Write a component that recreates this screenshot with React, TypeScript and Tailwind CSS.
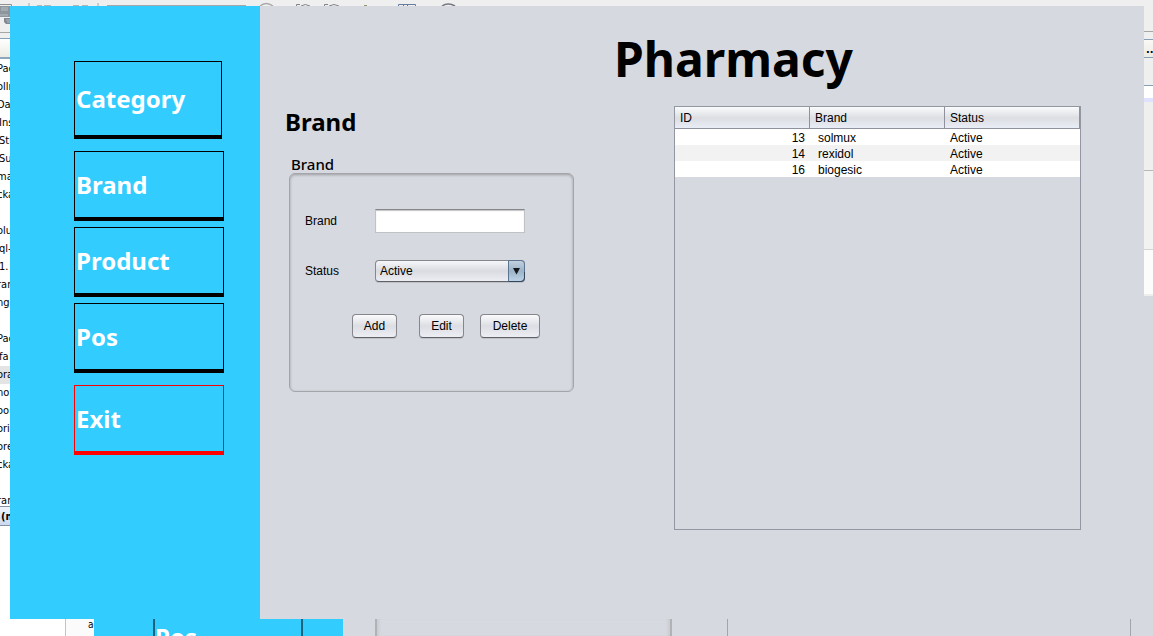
import React from "react";

const tree = [
  { text: "Pac", inset: false },
  { text: "ollm", inset: false },
  { text: "Dat", inset: false },
  { text: "Ins", inset: true },
  { text: "Stu", inset: true },
  { text: "Sul", inset: true },
  { text: "ma", inset: false },
  { text: "cka", inset: false },
  { text: "", inset: false },
  { text: "olu", inset: false },
  { text: "ql-", inset: true },
  { text: "1.", inset: true },
  { text: "ran", inset: false },
  { text: "nge", inset: false },
  { text: "", inset: false },
  { text: "Pac", inset: false },
  { text: "fa", inset: true },
  { text: "ora", inset: false, selected: true },
  { text: "no", inset: false },
  { text: "oo", inset: false },
  { text: "ori", inset: false },
  { text: "ore", inset: false },
  { text: "cka", inset: false },
  { text: "", inset: false },
  { text: "ran", inset: false },
];

const rows = [
  { id: 13, brand: "solmux", status: "Active" },
  { id: 14, brand: "rexidol", status: "Active" },
  { id: 16, brand: "biogesic", status: "Active" },
];

const navBase =
  "block border border-b-4 pl-px text-left text-2xl font-bold text-white font-['Noto_Sans','DejaVu_Sans_Condensed',sans-serif]";

const buttonBase =
  "h-6 rounded border border-[#85878d] border-b-[#5f6167] bg-linear-to-b from-[#fbfbfc] via-[#dcdee3] to-[#eceef4] text-xs shadow-[0_1px_0_#bfc2c8]";

const headCell =
  "border-r border-b border-[#8f929c] pl-[5px] text-left font-normal";

function ToolbarEdge() {
  return (
    <div className="h-[6px] shrink-0 overflow-hidden bg-[#efefef]">
      <svg className="block" width="480" height="6" fill="none" aria-hidden="true">
        <path d="M0 4.500H11.500V6" stroke="#8e9094" />
        <path d="M29 3V6M98 3V6" stroke="#a6a6a6" />
        <path d="M37 5.500H42M44 5.500H51M73 5.500H79M82 5.500H88" stroke="#b5b5b5" />
        <path d="M107 5.500H246" stroke="#a3a6aa" />
        <path d="M260 6Q266 1 273 6" stroke="#a8a8a8" strokeWidth="1.500" />
        <path d="M296.500 6V4.500H300M301 6Q305 3 310 6M324.500 6V4.500H328M329 6Q334 3 339 6" stroke="#80838a" />
        <path d="M364 5.500H367" stroke="#93966a" />
        <path d="M398.500 6V4.500H415.500V6M403.500 5V6M407.500 5V6" stroke="#627ca0" />
        <path d="M442 6Q448 2 455 6" stroke="#70757d" strokeWidth="1.500" />
      </svg>
    </div>
  );
}

function TreeEdge() {
  return (
    <div className="w-[10px] shrink-0 overflow-hidden bg-white font-['DejaVu_Sans_Condensed','Noto_Sans',sans-serif] text-[11px] leading-[18px] whitespace-nowrap text-black">
      <div className="h-[26px] bg-[#efefef]">
        <svg className="block" width="10" height="22" aria-hidden="true">
          <path d="M0 0H10V11H0Z" fill="#8d959d" />
          <path d="M1 2H8M1 4H8M0 9H8" stroke="#b9bec3" />
          <path d="M4 12H10V18H6L4 16Z" fill="#808992" />
          <path d="M6 14H10M7 16H10" stroke="#b4babf" />
        </svg>
      </div>
      <div className="h-[7px] border-b border-[#87a0b5] bg-[#efefef]">
        <div className="h-px bg-[#a6a6a6]" />
      </div>
      <div className="h-5 border-b-2 border-[#8fa5bb] bg-linear-to-b from-white to-[#ecebe4]" />
      <ul className="h-[447px] overflow-hidden pt-px">
        {tree.map((item, i) => (
          <li
            key={i}
            className={
              (item.selected ? "bg-[#e4e4e4] " : "") +
              (item.inset ? "-ml-px h-[18px]" : "-ml-[3px] h-[18px]")
            }
          >
            {item.text}
          </li>
        ))}
      </ul>
      <div className="h-5 border-y border-[#8393aa] bg-linear-to-b from-[#f1f5fc] to-[#cdd8ee] pl-px leading-5 font-bold">
        (m
      </div>
    </div>
  );
}

function EditorEdge() {
  return (
    <div className="w-[9px] shrink-0 overflow-hidden bg-[#d6d9e0]">
      <div className="h-[26px] border-b border-[#a6a6a6] bg-[#efefef]" />
      <div className="h-[7px] bg-[#efefef]" />
      <div className="h-[19px] overflow-hidden border-y border-[#87a0b5] bg-linear-to-b from-[#faf9f5] to-[#ecebe4] pl-[2px] font-['DejaVu_Sans_Condensed',sans-serif] text-[11px] leading-5 font-bold">
        ...
      </div>
      <div className="h-[27px] bg-[#efefef]" />
      <div className="h-[13px] border-t border-[#87a0b5] bg-white" />
      <div className="h-1 bg-[#e0e0ff]" />
      <div className="h-[69px] border-b border-[#b8b8b8] bg-[#efefef]" />
      <div className="h-[79px] border-b border-[#d5d5d5] bg-[#f2f2f2]" />
      <div className="h-[46px] border-b-2 border-[#eeeeee] bg-[#fcfcfc]" />
    </div>
  );
}

function WindowBehind() {
  return (
    <div className="flex h-[17px] shrink-0 overflow-hidden bg-[#d6d9e0]">
      <div className="w-[65px] bg-white" />
      <div className="w-[29px] overflow-hidden border-l border-[#c4c4c4] bg-[#fbfbfb] pl-[22px] font-['DejaVu_Sans_Condensed',sans-serif] text-[10px] leading-3">
        ac
      </div>
      <div className="w-[249px] bg-[#33ccff] pl-[59px]">
        <div className="h-10 w-[150px] border-x-2 border-[#17627c] font-['Noto_Sans','DejaVu_Sans_Condensed',sans-serif] text-2xl leading-9 font-bold text-white">
          Pos
        </div>
      </div>
      <div className="ml-8 w-[297px] border-x-2 border-[#b0b2b6] shadow-[inset_4px_0_3px_-2px_#c9cbcf,inset_-4px_0_3px_-2px_#c9cbcf]" />
      <div className="ml-[55px] mr-[22px] flex-1 border-x border-[#a2a5ac]" />
    </div>
  );
}

function Sidebar() {
  return (
    <nav className="w-[250px] shrink-0 bg-[#33ccff] pt-[55px] pl-16">
      <button className={navBase + " h-[78px] w-[148px] border-black"}>Category</button>
      <button className={navBase + " mt-3 h-[70px] w-[150px] border-black"}>Brand</button>
      <button className={navBase + " mt-[6px] h-[70px] w-[150px] border-black"}>Product</button>
      <button className={navBase + " mt-[6px] h-[70px] w-[150px] border-black"}>Pos</button>
      <button className={navBase + " mt-3 h-[70px] w-[150px] border-[#ff0000]"}>Exit</button>
    </nav>
  );
}

function BrandForm() {
  return (
    <section className="w-[289px] shrink-0 pt-[70px]">
      <h2 className="font-['Noto_Sans','DejaVu_Sans_Condensed',sans-serif] text-2xl leading-8 font-bold">
        Brand
      </h2>
      <form className="ml-1 pt-[18px]" onSubmit={(e) => e.preventDefault()}>
        <h3 className="pb-px pl-[2px] font-['Noto_Sans',sans-serif] text-[15px] leading-4 font-medium">Brand</h3>
        <div className="h-[219px] w-[285px] rounded-md border border-[#a3a5aa] bg-[#d6d9df] pt-[35px] pl-[15px] text-xs shadow-[inset_0_1px_3px_#9b9da3]">
          <div className="flex items-center">
            <label htmlFor="brand" className="w-[70px]">Brand</label>
            <input
              id="brand"
              className="h-6 w-[150px] border border-[#c0c2c6] border-t-[#85878c] bg-white px-1 shadow-[inset_0_1px_1px_#c4c4c4] outline-none"
            />
          </div>
          <div className="mt-[27px] flex items-center">
            <label htmlFor="status" className="w-[70px]">Status</label>
            <div className="relative">
              <select
                id="status"
                className="block h-[22px] w-[150px] appearance-none rounded border border-[#85878d] border-b-[#5f6167] bg-linear-to-b from-[#f6f7f9] via-[#d9dbe0] to-[#eceef4] pl-1 shadow-[0_1px_0_#bfc2c8] outline-none"
              >
                <option>Active</option>
                <option>Inactive</option>
              </select>
              <svg className="pointer-events-none absolute top-0 right-0" width="17" height="22" aria-hidden="true">
                <defs>
                  <linearGradient id="arrow" x1="0" y1="0" x2="0" y2="1">
                    <stop offset="0" stopColor="#c4d2df" />
                    <stop offset="0.500" stopColor="#9bb3c8" />
                    <stop offset="1" stopColor="#bed3e6" />
                  </linearGradient>
                </defs>
                <path d="M.5 .5H13Q16.500 .5 16.500 4V18Q16.500 21.500 13 21.500H.5Z" fill="url(#arrow)" stroke="#5b7590" />
                <path d="M13 21.500Q16.500 21.500 16.500 18V12M.5 21.500H13" fill="none" stroke="#32475c" />
                <path d="M5 8H12L8.500 14.500Z" fill="#15181c" />
              </svg>
            </div>
          </div>
          <div className="mt-8 flex pl-[47px]">
            <button className={buttonBase + " w-[45px]"}>Add</button>
            <button className={buttonBase + " ml-[22px] w-[45px]"}>Edit</button>
            <button className={buttonBase + " ml-4 w-[60px]"}>Delete</button>
          </div>
        </div>
      </form>
    </section>
  );
}

function BrandTable() {
  return (
    <div className="ml-[100px] h-[424px] border border-[#9297a1] text-xs">
      <table className="w-full table-fixed border-separate border-spacing-0">
        <thead>
          <tr className="h-[22px] bg-linear-to-b from-[#fafbfc] via-[#dcdee2] to-[#eaeef7]">
            <th className={headCell}>ID</th>
            <th className={headCell}>Brand</th>
            <th className={headCell}>Status</th>
          </tr>
        </thead>
        <tbody className="leading-[14px]">
          {rows.map((row) => (
            <tr key={row.id} className="bg-white even:bg-[#f2f2f2]">
              <td className="pt-[2px] pr-[5px] text-right">{row.id}</td>
              <td className="pt-[2px] pl-2">{row.brand}</td>
              <td className="pt-[2px] pl-[5px]">{row.status}</td>
            </tr>
          ))}
        </tbody>
      </table>
    </div>
  );
}

export default function App() {
  return (
    <div className="flex min-h-screen flex-col overflow-hidden bg-[#d6d9e0] font-['Liberation_Sans',Arial,sans-serif] text-black">
      <ToolbarEdge />
      <div className="flex flex-1">
        <TreeEdge />
        <Sidebar />
        <main className="flex min-w-0 flex-1 items-start bg-[#d6d9e0] pt-[30px] pr-[63px] pl-[25px]">
          <BrandForm />
          <div className="min-w-0 flex-1">
            <h1 className="ml-10 pb-6 font-['Noto_Sans','DejaVu_Sans_Condensed',sans-serif] text-5xl leading-[46px] font-bold">
              Pharmacy
            </h1>
            <BrandTable />
          </div>
        </main>
        <EditorEdge />
      </div>
      <WindowBehind />
    </div>
  );
}
